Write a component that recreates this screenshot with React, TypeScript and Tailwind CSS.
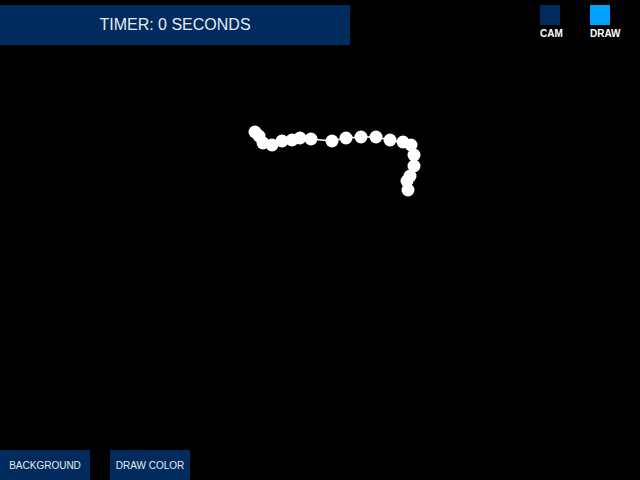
import React from "react";

const pts: [number, number][] = [
  [255, 132], [259, 136], [263, 143], [272, 145], [282, 141], [292, 140],
  [300, 138], [311, 139], [332, 141], [346, 138], [361, 137], [376, 137],
  [390, 140], [403, 142], [411, 145], [414, 155], [414, 166], [410, 176],
  [407, 181], [408, 190],
];

export default function App() {
  const d = pts.map((p, i) => `${i ? "L" : "M"}${p[0]} ${p[1]}`).join(" ");
  return (
    <div
      className="relative w-[640px] h-[480px] bg-black overflow-hidden flex flex-col justify-between"
      style={{ fontFamily: '"Liberation Sans", Arial, sans-serif' }}
    >
      <svg className="absolute inset-0" width={640} height={480}>
        <path d={d} stroke="white" strokeWidth={1.5} fill="none" />
        {pts.map((p, i) => (
          <circle key={i} cx={p[0]} cy={p[1]} r={6.5} fill="white" />
        ))}
      </svg>
      <div className="relative flex items-start justify-between pt-[5px]">
        <div className="w-[350px] h-[40px] bg-[#002b5c] flex items-center justify-center text-[16px] text-[#e4ecf6]">
          TIMER: 0 SECONDS
        </div>
        <div className="flex gap-[30px] pr-[30px]">
          <div className="w-[20px] flex flex-col items-start">
            <div className="w-[20px] h-[20px] bg-[#002b5c]" />
            <div className="mt-[3px] text-[10px] font-bold leading-[12px] text-white whitespace-nowrap">CAM</div>
          </div>
          <div className="w-[20px] flex flex-col items-start">
            <div className="w-[20px] h-[20px] bg-[#00a2ff]" />
            <div className="mt-[3px] text-[10px] font-bold leading-[12px] text-white whitespace-nowrap">DRAW</div>
          </div>
        </div>
      </div>
      <div className="relative flex gap-[20px]">
        <div className="w-[90px] h-[30px] bg-[#002b5c] flex items-center justify-center text-[10px] text-[#e4ecf6]">
          BACKGROUND
        </div>
        <div className="w-[80px] h-[30px] bg-[#002b5c] flex items-center justify-center text-[10px] text-[#e4ecf6]">
          DRAW COLOR
        </div>
      </div>
    </div>
  );
}
